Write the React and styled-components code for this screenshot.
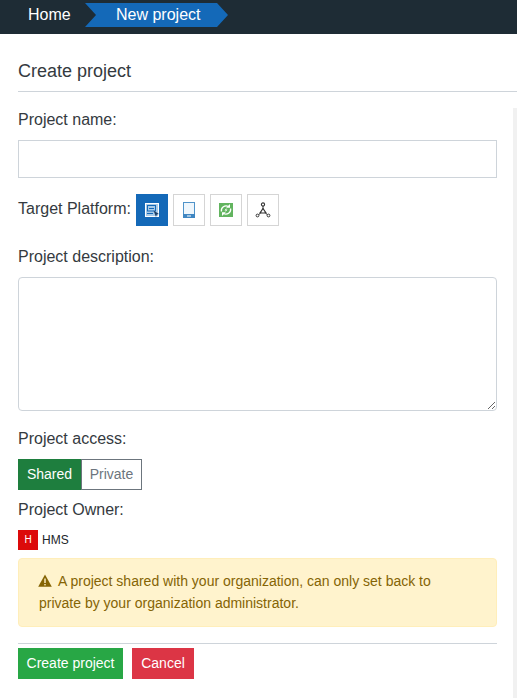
import styled, { createGlobalStyle } from "styled-components";

const GlobalStyle = createGlobalStyle`
  html, body {
    margin: 0;
    padding: 0;
    background: #fff;
    overflow: hidden;
  }
  * { box-sizing: border-box; }
  body {
    font-family: "Liberation Sans", Arial, sans-serif;
    color: #343a40;
  }
`;

const Page = styled.div`
  width: 517px;
  height: 698px;
  overflow: hidden;
`;

const TopBar = styled.div`
  height: 34px;
  background: #1e2c35;
  display: flex;
  align-items: flex-start;
  padding-top: 3px;
  color: #fff;
  font-size: 16px;
`;

const Crumb = styled.div`
  height: 24px;
  line-height: 24px;
  width: 85px;
  padding-left: 28px;
`;

const ActiveCrumb = styled.div`
  height: 24px;
  line-height: 24px;
  width: 143px;
  padding-left: 31px;
  background: #1469b8;
  clip-path: polygon(0 0, 132px 0, 143px 12px, 132px 24px, 0 24px, 11px 12px);
`;

const TitleBar = styled.div`
  height: 58px;
  margin-left: 18px;
  border-bottom: 1px solid #ced4da;
  font-size: 18px;
  line-height: 20px;
  padding-top: 27px;
  color: #343a40;
`;

const Body = styled.div`
  display: flex;
  align-items: flex-start;
  padding-top: 16px;
`;

const Form = styled.form`
  width: 479px;
  margin-left: 18px;
`;

const Track = styled.div`
  width: 4px;
  height: 590px;
  margin-left: 16px;
  background: #f1f1f1;
`;

const Label = styled.div`
  font-size: 16px;
  line-height: 24px;
  margin-top: ${({ $top }) => $top || 0}px;
`;

const TextInput = styled.input`
  display: block;
  width: 100%;
  height: 38px;
  margin-top: 8px;
  border: 1px solid #ced4da;
  background: #fff;
  outline: none;
`;

const PlatformRow = styled.div`
  display: flex;
  align-items: center;
  height: 32px;
  margin-top: 16px;
  font-size: 16px;
`;

const PlatformLabel = styled.span`
  margin-right: 5px;
  margin-bottom: 2px;
`;

const PlatformButton = styled.button`
  width: 32px;
  height: 32px;
  padding: 0;
  margin-right: 5px;
  display: flex;
  align-items: center;
  justify-content: center;
  border: 1px solid ${({ $active }) => ($active ? "#1469b8" : "#d5d5d5")};
  background: ${({ $active }) => ($active ? "#1469b8" : "#fff")};
`;

const TextArea = styled.textarea`
  display: block;
  width: 100%;
  height: 134px;
  margin-top: 8px;
  border: 1px solid #ced4da;
  border-radius: 4px;
  outline: none;
  background: #fff;
`;

const AccessGroup = styled.div`
  display: flex;
  height: 31px;
  margin-top: 8px;
  font-size: 14px;
`;

const AccessOption = styled.div`
  height: 31px;
  line-height: 29px;
  width: ${({ $width }) => $width}px;
  text-align: center;
  color: ${({ $on }) => ($on ? "#fff" : "#6c757d")};
  background: ${({ $on }) => ($on ? "#1e7e3e" : "#fff")};
  border: 1px solid ${({ $on }) => ($on ? "#1e7e3e" : "#6c757d")};
`;

const OwnerRow = styled.div`
  display: flex;
  align-items: center;
  gap: 4px;
  margin-top: 8px;
  height: 20px;
  font-size: 12px;
  color: #212529;
`;

const Avatar = styled.div`
  width: 20px;
  height: 20px;
  background: #dc0a0a;
  color: #fff;
  font-size: 10px;
  line-height: 20px;
  text-align: center;
`;

const Alert = styled.div`
  height: 69px;
  margin-top: 8px;
  padding: 11px 40px 11px 20px;
  background: #fff3cd;
  border: 1px solid #ffeeba;
  border-radius: 4px;
  color: #856404;
  font-size: 14px;
  line-height: 22px;
`;

const AlertIcon = styled.svg`
  width: 14px;
  height: 13px;
  margin-left: -1px;
  margin-right: 6px;
  vertical-align: -1px;
`;

const Footer = styled.div`
  margin-top: 16px;
  padding-top: 4px;
  border-top: 1px solid #ced4da;
  display: flex;
  gap: 9px;
`;

const ActionButton = styled.button`
  width: ${({ $width }) => $width}px;
  height: 31px;
  padding: 0 0 2px;
  border: none;
  background: ${({ $bg }) => $bg};
  color: #fff;
  font-family: inherit;
  font-size: 14px;
`;

function ReportIcon() {
  return (
    <svg width="16" height="16" viewBox="0 0 16 16">
      <rect x="1" y="1" width="14" height="14" fill="#fff" />
      <rect x="2" y="2" width="12" height="12" fill="#a9cbe8" />
      <rect x="3.500" y="3.500" width="8" height="5.500" fill="none" stroke="#1469b8" strokeWidth="1" />
      <path d="M5 6.500h5M3 11.500h6" stroke="#1469b8" strokeWidth="1" />
      <path d="M9.500 8.500l5.500 3.500-2.200.6-.8 2.400z" fill="#1d3f66" />
    </svg>
  );
}

function TabletIcon() {
  return (
    <svg width="12" height="16" viewBox="0 0 12 16">
      <rect x="0.500" y="0.500" width="11" height="15" fill="#eef6fc" stroke="#4f93c9" strokeWidth="1" />
      <rect x="0" y="12" width="12" height="4" fill="#3f86c2" />
      <rect x="4" y="13.500" width="4" height="1" fill="#fff" />
    </svg>
  );
}

function SyncIcon() {
  return (
    <svg width="14" height="14" viewBox="0 0 14 14">
      <rect width="14" height="14" fill="#62b45f" />
      <path d="M2.400 8.500a4.800 4.800 0 0 1 7-5M11.600 5.500a4.800 4.800 0 0 1-7 5" fill="none" stroke="#fff" strokeWidth="1.300" />
      <path d="M11 1v3.800H7.200zM3 13V9.200h3.800z" fill="#fff" />
      <path d="M7.800 4.500L5.500 7.500H7L6.200 9.500L8.500 6.500H7z" fill="#fff" />
    </svg>
  );
}

function NetworkIcon() {
  return (
    <svg width="16" height="16" viewBox="0 0 16 16">
      <path d="M8 4v3M6 10.500L3.500 13M10 10.500L12.500 13" stroke="#444" strokeWidth="1" />
      <path d="M8 6.500L11 11H5z" fill="none" stroke="#333" strokeWidth="1.200" />
      <circle cx="8" cy="2.500" r="1.600" fill="#fff" stroke="#333" strokeWidth="1.100" />
      <circle cx="2.500" cy="13.500" r="1.400" fill="#fff" stroke="#333" strokeWidth="1" />
      <circle cx="13.500" cy="13.500" r="1.400" fill="#fff" stroke="#333" strokeWidth="1" />
    </svg>
  );
}

export default function App() {
  return (
    <Page>
      <GlobalStyle />
      <TopBar>
        <Crumb>Home</Crumb>
        <ActiveCrumb>New project</ActiveCrumb>
      </TopBar>
      <TitleBar>Create project</TitleBar>
      <Body>
        <Form>
          <Label>Project name:</Label>
          <TextInput type="text" />
          <PlatformRow>
            <PlatformLabel>Target Platform:</PlatformLabel>
            <PlatformButton type="button" $active><ReportIcon /></PlatformButton>
            <PlatformButton type="button"><TabletIcon /></PlatformButton>
            <PlatformButton type="button"><SyncIcon /></PlatformButton>
            <PlatformButton type="button"><NetworkIcon /></PlatformButton>
          </PlatformRow>
          <Label $top={19}>Project description:</Label>
          <TextArea />
          <Label $top={16}>Project access:</Label>
          <AccessGroup>
            <AccessOption $on $width={63}>Shared</AccessOption>
            <AccessOption $width={61}>Private</AccessOption>
          </AccessGroup>
          <Label $top={8}>Project Owner:</Label>
          <OwnerRow>
            <Avatar>H</Avatar>
            <span>HMS</span>
          </OwnerRow>
          <Alert>
            <AlertIcon viewBox="0 0 14 13">
              <path d="M7 0.500L13.800 12.800H0.200Z" fill="#856404" />
              <rect x="6.300" y="4.500" width="1.400" height="4.500" fill="#fff3cd" />
              <rect x="6.300" y="10" width="1.400" height="1.400" fill="#fff3cd" />
            </AlertIcon>
            A project shared with your organization, can only set back to private by your organization administrator.
          </Alert>
          <Footer>
            <ActionButton type="button" $bg="#28a745" $width={105}>Create project</ActionButton>
            <ActionButton type="button" $bg="#dc3545" $width={62}>Cancel</ActionButton>
          </Footer>
        </Form>
        <Track />
      </Body>
    </Page>
  );
}
